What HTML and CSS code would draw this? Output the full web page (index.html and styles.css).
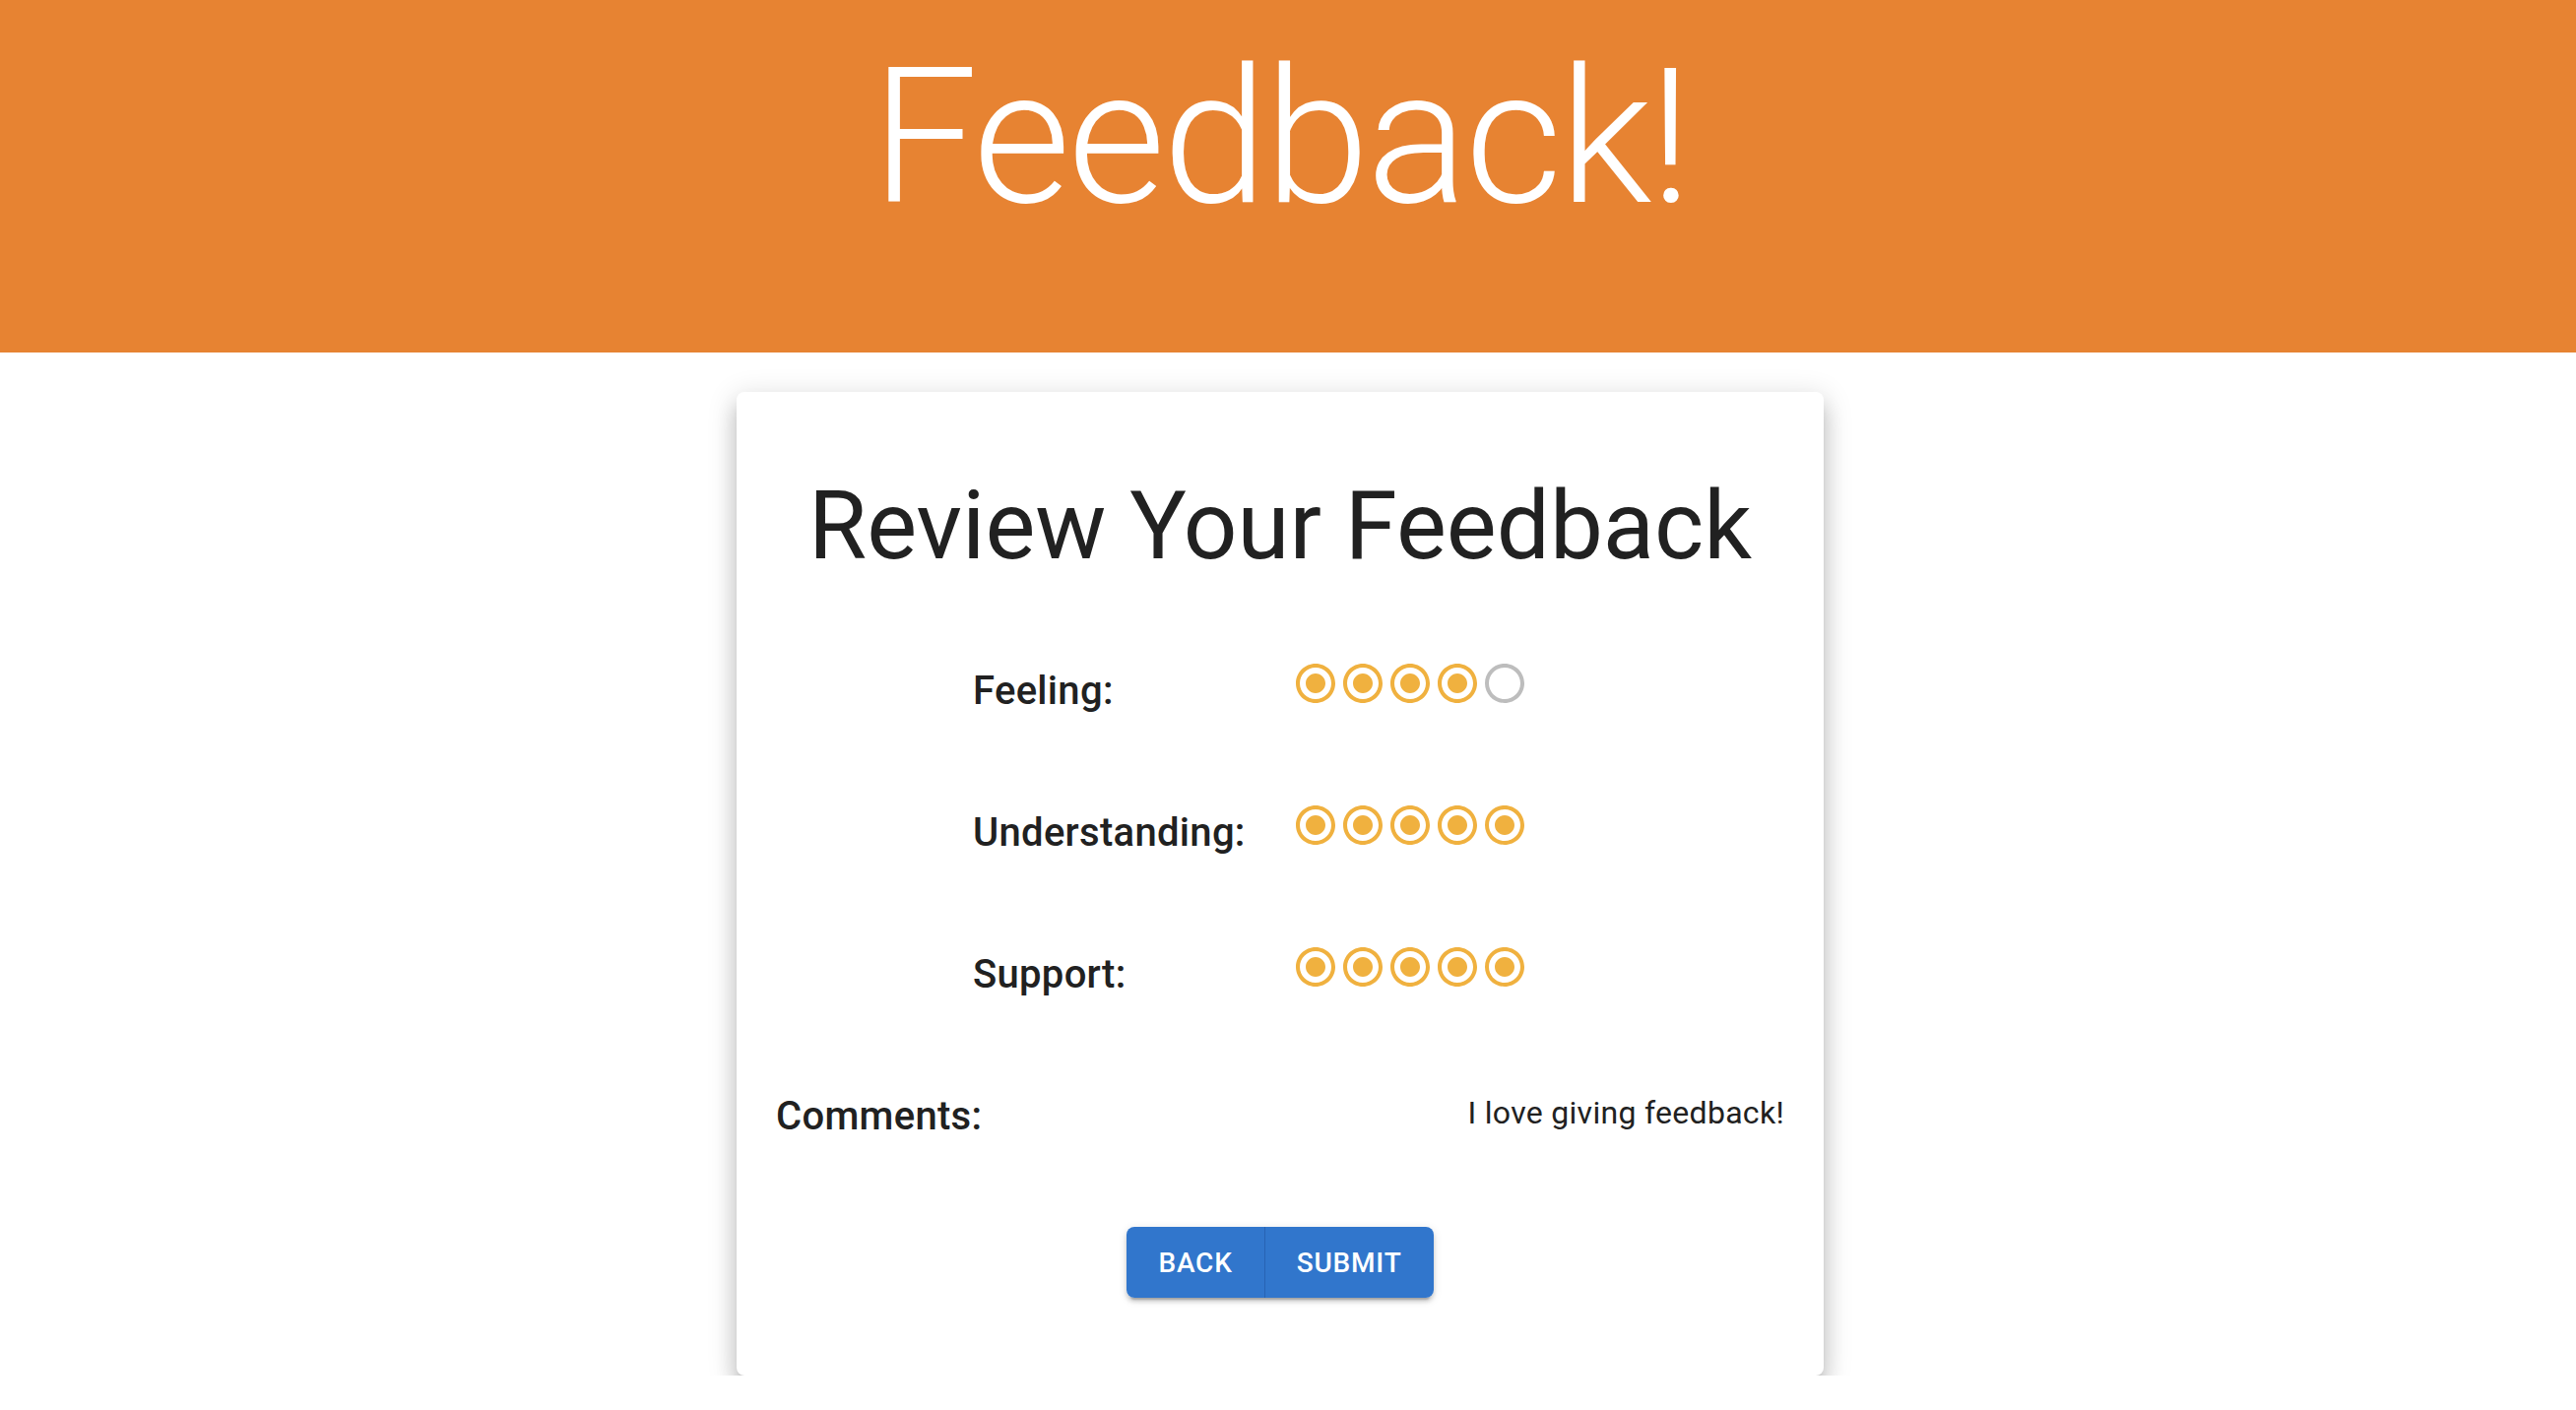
FILE: index.html
```html
<!DOCTYPE html>
<html lang="en">
<head>
<meta charset="utf-8">
<title>Feedback!</title>
<link rel="stylesheet" href="styles.css">
</head>
<body>
<header class="app-header">
  <h1 class="app-title">Feedback!</h1>
</header>
<main class="page">
  <section class="card">
    <h2 class="card-title">Review Your Feedback</h2>

    <div class="rating-row">
      <div class="row-label">Feeling:</div>
      <div class="stars">
        <svg class="star on" viewBox="0 0 24 24"><path d="M12 7c-2.76 0-5 2.24-5 5s2.24 5 5 5 5-2.24 5-5-2.24-5-5-5zm0-5C6.48 2 2 6.48 2 12s4.48 10 10 10 10-4.48 10-10S17.52 2 12 2zm0 18c-4.42 0-8-3.58-8-8s3.58-8 8-8 8 3.58 8 8-3.58 8-8 8z"/></svg>
        <svg class="star on" viewBox="0 0 24 24"><path d="M12 7c-2.76 0-5 2.24-5 5s2.24 5 5 5 5-2.24 5-5-2.24-5-5-5zm0-5C6.48 2 2 6.48 2 12s4.48 10 10 10 10-4.48 10-10S17.52 2 12 2zm0 18c-4.42 0-8-3.58-8-8s3.58-8 8-8 8 3.58 8 8-3.58 8-8 8z"/></svg>
        <svg class="star on" viewBox="0 0 24 24"><path d="M12 7c-2.76 0-5 2.24-5 5s2.24 5 5 5 5-2.24 5-5-2.24-5-5-5zm0-5C6.48 2 2 6.48 2 12s4.48 10 10 10 10-4.48 10-10S17.52 2 12 2zm0 18c-4.42 0-8-3.58-8-8s3.58-8 8-8 8 3.58 8 8-3.58 8-8 8z"/></svg>
        <svg class="star on" viewBox="0 0 24 24"><path d="M12 7c-2.76 0-5 2.24-5 5s2.24 5 5 5 5-2.24 5-5-2.24-5-5-5zm0-5C6.48 2 2 6.48 2 12s4.48 10 10 10 10-4.48 10-10S17.52 2 12 2zm0 18c-4.42 0-8-3.58-8-8s3.58-8 8-8 8 3.58 8 8-3.58 8-8 8z"/></svg>
        <svg class="star off" viewBox="0 0 24 24"><path d="M12 2C6.48 2 2 6.48 2 12s4.48 10 10 10 10-4.48 10-10S17.52 2 12 2zm0 18c-4.42 0-8-3.58-8-8s3.58-8 8-8 8 3.58 8 8-3.58 8-8 8z"/></svg>
      </div>
    </div>

    <div class="rating-row">
      <div class="row-label">Understanding:</div>
      <div class="stars">
        <svg class="star on" viewBox="0 0 24 24"><path d="M12 7c-2.76 0-5 2.24-5 5s2.24 5 5 5 5-2.24 5-5-2.24-5-5-5zm0-5C6.48 2 2 6.480 2 12s4.48 10 10 10 10-4.48 10-10S17.52 2 12 2zm0 18c-4.42 0-8-3.58-8-8s3.58-8 8-8 8 3.58 8 8-3.58 8-8 8z"/></svg>
        <svg class="star on" viewBox="0 0 24 24"><path d="M12 7c-2.76 0-5 2.24-5 5s2.24 5 5 5 5-2.24 5-5-2.24-5-5-5zm0-5C6.48 2 2 6.48 2 12s4.48 10 10 10 10-4.48 10-10S17.52 2 12 2zm0 18c-4.42 0-8-3.58-8-8s3.58-8 8-8 8 3.58 8 8-3.58 8-8 8z"/></svg>
        <svg class="star on" viewBox="0 0 24 24"><path d="M12 7c-2.76 0-5 2.24-5 5s2.24 5 5 5 5-2.24 5-5-2.24-5-5-5zm0-5C6.48 2 2 6.48 2 12s4.48 10 10 10 10-4.48 10-10S17.52 2 12 2zm0 18c-4.42 0-8-3.58-8-8s3.58-8 8-8 8 3.58 8 8-3.58 8-8 8z"/></svg>
        <svg class="star on" viewBox="0 0 24 24"><path d="M12 7c-2.76 0-5 2.24-5 5s2.24 5 5 5 5-2.24 5-5-2.24-5-5-5zm0-5C6.48 2 2 6.48 2 12s4.48 10 10 10 10-4.48 10-10S17.52 2 12 2zm0 18c-4.42 0-8-3.58-8-8s3.58-8 8-8 8 3.58 8 8-3.58 8-8 8z"/></svg>
        <svg class="star on" viewBox="0 0 24 24"><path d="M12 7c-2.76 0-5 2.24-5 5s2.24 5 5 5 5-2.24 5-5-2.24-5-5-5zm0-5C6.48 2 2 6.48 2 12s4.48 10 10 10 10-4.48 10-10S17.52 2 12 2zm0 18c-4.42 0-8-3.58-8-8s3.58-8 8-8 8 3.58 8 8-3.58 8-8 8z"/></svg>
      </div>
    </div>

    <div class="rating-row">
      <div class="row-label">Support:</div>
      <div class="stars">
        <svg class="star on" viewBox="0 0 24 24"><path d="M12 7c-2.76 0-5 2.24-5 5s2.24 5 5 5 5-2.24 5-5-2.24-5-5-5zm0-5C6.48 2 2 6.48 2 12s4.48 10 10 10 10-4.48 10-10S17.52 2 12 2zm0 18c-4.420 0-8-3.58-8-8s3.58-8 8-8 8 3.58 8 8-3.58 8-8 8z"/></svg>
        <svg class="star on" viewBox="0 0 24 24"><path d="M12 7c-2.76 0-5 2.24-5 5s2.24 5 5 5 5-2.24 5-5-2.24-5-5-5zm0-5C6.48 2 2 6.48 2 12s4.48 10 10 10 10-4.48 10-10S17.52 2 12 2zm0 18c-4.42 0-8-3.58-8-8s3.58-8 8-8 8 3.58 8 8-3.58 8-8 8z"/></svg>
        <svg class="star on" viewBox="0 0 24 24"><path d="M12 7c-2.76 0-5 2.24-5 5s2.24 5 5 5 5-2.24 5-5-2.24-5-5-5zm0-5C6.48 2 2 6.48 2 12s4.48 10 10 10 10-4.48 10-10S17.52 2 12 2zm0 18c-4.42 0-8-3.58-8-8s3.58-8 8-8 8 3.58 8 8-3.58 8-8 8z"/></svg>
        <svg class="star on" viewBox="0 0 24 24"><path d="M12 7c-2.76 0-5 2.24-5 5s2.24 5 5 5 5-2.24 5-5-2.24-5-5-5zm0-5C6.48 2 2 6.48 2 12s4.48 10 10 10 10-4.48 10-10S17.52 2 12 2zm0 18c-4.42 0-8-3.58-8-8s3.58-8 8-8 8 3.58 8 8-3.58 8-8 8z"/></svg>
        <svg class="star on" viewBox="0 0 24 24"><path d="M12 7c-2.76 0-5 2.24-5 5s2.24 5 5 5 5-2.24 5-5-2.24-5-5-5zm0-5C6.48 2 2 6.48 2 12s4.48 10 10 10 10-4.48 10-10S17.52 2 12 2zm0 18c-4.42 0-8-3.58-8-8s3.58-8 8-8 8 3.58 8 8-3.58 8-8 8z"/></svg>
      </div>
    </div>

    <div class="comments-row">
      <div class="comments-label">Comments:</div>
      <div class="comments-text">I love giving feedback!</div>
    </div>

    <div class="button-group">
      <button class="btn btn-first" type="button">Back</button>
      <button class="btn" type="button">Submit</button>
    </div>
  </section>
</main>
</body>
</html>
```

FILE: styles.css
```css
html, body {
  margin: 0;
  padding: 0;
  background: #ffffff;
}

body {
  font-family: Roboto, "Liberation Sans", Arial, sans-serif;
  color: #212121;
}

.app-header {
  box-sizing: border-box;
  height: 358px;
  padding: 28px 16px 0 0;
  background: #e78332;
  display: flex;
  justify-content: center;
  align-items: flex-start;
}

.app-title {
  margin: 0;
  font-family: Roboto, "Liberation Sans", sans-serif;
  font-weight: 300;
  font-size: 192px;
  line-height: 224px;
  letter-spacing: -3px;
  color: #ffffff;
}

.page {
  display: flex;
  justify-content: center;
  padding: 40px 16px 0 0;
}

.card {
  box-sizing: border-box;
  width: 1104px;
  padding: 80px 40px 79px;
  background: #ffffff;
  border-radius: 8px;
  box-shadow: 0 10px 10px -6px rgba(0, 0, 0, 0.2),
              0 16px 20px 2px rgba(0, 0, 0, 0.14),
              0 6px 28px 4px rgba(0, 0, 0, 0.12);
  display: flex;
  flex-direction: column;
  gap: 80px;
}

.card-title {
  margin: 0;
  text-align: center;
  font-weight: 400;
  font-size: 96px;
  line-height: 112px;
  color: #212121;
}

.rating-row {
  display: flex;
  align-items: flex-start;
  padding-left: 200px;
}

.row-label {
  width: 324px;
  font-weight: 500;
  font-size: 40px;
  line-height: 64px;
  letter-spacing: 0.3px;
  color: #212121;
}

.stars {
  display: flex;
  height: 48px;
}

.star {
  width: 48px;
  height: 48px;
  display: block;
}

.star.on {
  fill: #f0b13f;
}

.star.off {
  fill: #bdbdbd;
}

.comments-row {
  display: flex;
  justify-content: space-between;
  align-items: flex-start;
}

.comments-label {
  font-weight: 500;
  font-size: 40px;
  line-height: 64px;
  letter-spacing: 0.3px;
  color: #212121;
}

.comments-text {
  margin-top: 4px;
  font-weight: 400;
  font-size: 32px;
  line-height: 48px;
  letter-spacing: 0.3px;
  color: #212121;
}

.button-group {
  align-self: center;
  display: flex;
  border-radius: 8px;
  box-shadow: 0 6px 2px -4px rgba(0, 0, 0, 0.2),
              0 4px 4px 0 rgba(0, 0, 0, 0.14),
              0 2px 10px 0 rgba(0, 0, 0, 0.12);
}

.btn {
  box-sizing: border-box;
  height: 72px;
  min-width: 128px;
  padding: 0 32px;
  border: none;
  margin: 0;
  background: #3176cc;
  color: #ffffff;
  font-family: Roboto, "Liberation Sans", sans-serif;
  font-weight: 500;
  font-size: 28px;
  letter-spacing: 0.8px;
  text-transform: uppercase;
  cursor: pointer;
}

.btn:first-child {
  border-radius: 8px 0 0 8px;
}

.btn:last-child {
  border-radius: 0 8px 8px 0;
}

.btn-first {
  border-right: 1px solid #2763b3;
}
```
